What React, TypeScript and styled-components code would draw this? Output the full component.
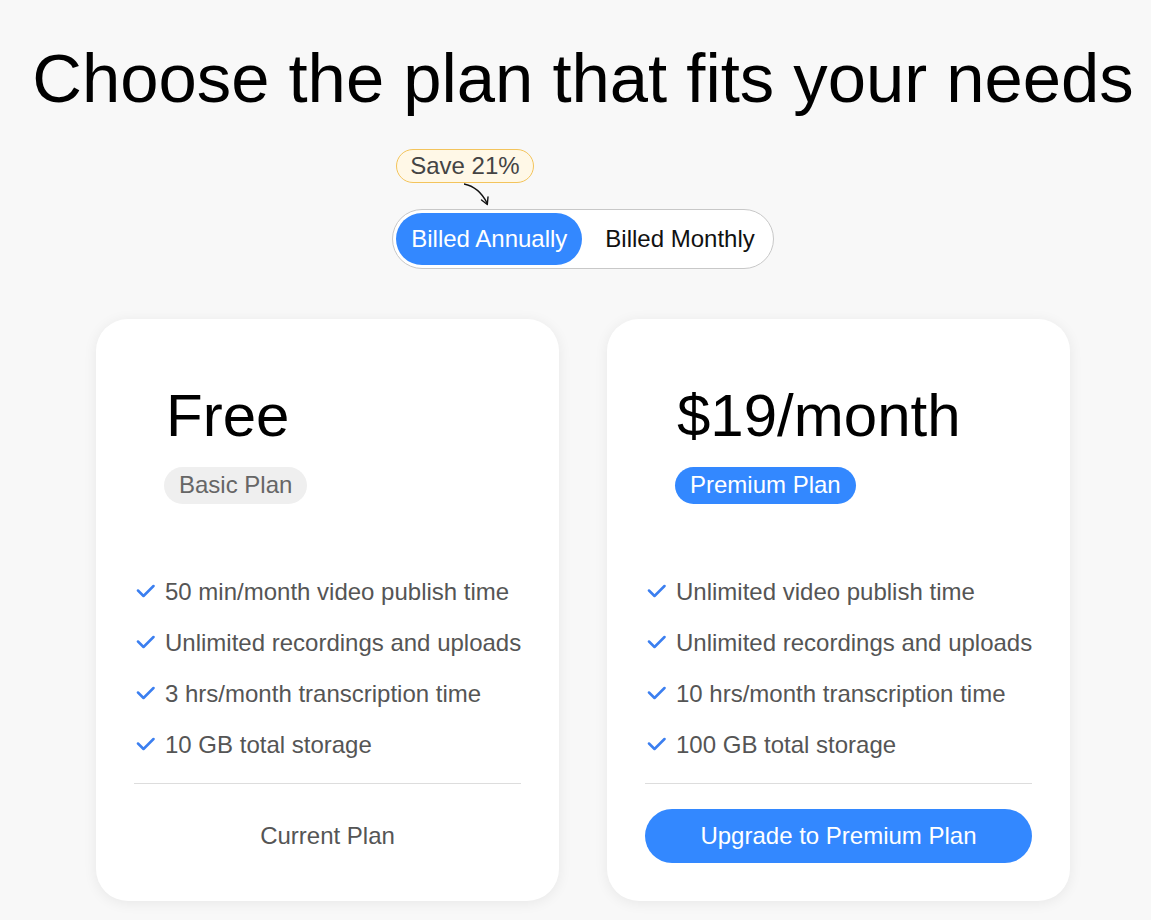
import styled, { createGlobalStyle } from "styled-components";

const GlobalStyle = createGlobalStyle`
  html, body {
    margin: 0;
    padding: 0;
    background: #f8f8f8;
  }
  body {
    font-family: "Liberation Sans", Arial, sans-serif;
  }
`;

const Page = styled.div`
  min-height: 920px;
  padding-left: 15px;
  display: flex;
  flex-direction: column;
  align-items: center;
`;

const Heading = styled.h1`
  margin: 39px 0 0;
  font-size: 68.8px;
  font-weight: 400;
  line-height: 79px;
  color: #000;
  white-space: nowrap;
`;

const Switcher = styled.div`
  margin-top: 31px;
  display: flex;
  flex-direction: column;
  align-items: flex-start;
`;

const SaveBadge = styled.span`
  margin-left: 4px;
  padding: 2px 13px;
  font-size: 24px;
  line-height: 28px;
  color: #444;
  background: #fff8e7;
  border: 1px solid #f3c45c;
  border-radius: 18px;
`;

const Arrow = styled.svg`
  display: block;
  margin-left: 72px;
  width: 30px;
  height: 26px;
`;

const Toggle = styled.div`
  display: flex;
  gap: 8px;
  padding: 3px;
  background: #fff;
  border: 1px solid #c8c8c8;
  border-radius: 40px;
`;

const ToggleOption = styled.button<{ $active?: boolean }>`
  padding: 12px 15px;
  border: none;
  border-radius: 30px;
  font-family: inherit;
  font-size: 24px;
  line-height: 27.6px;
  cursor: pointer;
  color: ${(p) => (p.$active ? "#fff" : "#111")};
  background: ${(p) => (p.$active ? "#3388ff" : "transparent")};
`;

const Cards = styled.div`
  margin-top: 50px;
  display: flex;
  gap: 48px;
`;

const Card = styled.div`
  width: 463px;
  box-sizing: border-box;
  padding: 38px;
  background: #fff;
  border-radius: 32px;
  box-shadow: 0 2px 14px rgba(0, 0, 0, 0.07);
  display: flex;
  flex-direction: column;
`;

const CardHead = styled.div`
  padding: 24px 0 0 30px;
  display: flex;
  flex-direction: column;
  align-items: flex-start;
`;

const Price = styled.div`
  font-size: 60px;
  line-height: 69px;
  color: #000;
  margin-left: 2px;
`;

const PlanTag = styled.span<{ $premium?: boolean }>`
  margin-top: 17px;
  padding: 4.5px 15px;
  font-size: 24px;
  line-height: 28px;
  border-radius: 20px;
  color: ${(p) => (p.$premium ? "#fff" : "#666")};
  background: ${(p) => (p.$premium ? "#3388ff" : "#efefef")};
`;

const Features = styled.ul`
  list-style: none;
  margin: 74px 0 0;
  padding: 0;
  display: flex;
  flex-direction: column;
  gap: 23.4px;
`;

const Feature = styled.li`
  display: flex;
  align-items: center;
  gap: 10px;
  font-size: 24px;
  line-height: 27.6px;
  color: #555;
  white-space: nowrap;
`;

const CheckIcon = styled.svg`
  flex: none;
  margin-left: 2px;
  width: 19px;
  height: 14px;
`;

const Divider = styled.hr`
  margin: 25px 0;
  border: none;
  border-top: 1px solid #ddd;
`;

const Action = styled.button<{ $primary?: boolean }>`
  height: 54px;
  border: none;
  border-radius: 27px;
  font-family: inherit;
  font-size: 24px;
  cursor: ${(p) => (p.$primary ? "pointer" : "default")};
  color: ${(p) => (p.$primary ? "#fff" : "#555")};
  background: ${(p) => (p.$primary ? "#3388ff" : "transparent")};
`;

const Check = () => (
  <CheckIcon viewBox="0 0 19 14">
    <path
      d="M2 6.5 L7.5 12 L17.5 2"
      fill="none"
      stroke="#3b7ff0"
      strokeWidth="2.5"
      strokeLinecap="round"
      strokeLinejoin="round"
    />
  </CheckIcon>
);

const plans = [
  {
    price: "Free",
    tag: "Basic Plan",
    premium: false,
    features: [
      "50 min/month video publish time",
      "Unlimited recordings and uploads",
      "3 hrs/month transcription time",
      "10 GB total storage",
    ],
    action: "Current Plan",
  },
  {
    price: "$19/month",
    tag: "Premium Plan",
    premium: true,
    features: [
      "Unlimited video publish time",
      "Unlimited recordings and uploads",
      "10 hrs/month transcription time",
      "100 GB total storage",
    ],
    action: "Upgrade to Premium Plan",
  },
];

export default function App() {
  return (
    <>
      <GlobalStyle />
      <Page>
        <Heading>Choose the plan that fits your needs</Heading>
        <Switcher>
          <SaveBadge>Save 21%</SaveBadge>
          <Arrow viewBox="0 0 30 26">
            <path
              d="M0 1 C 10 3, 17 8, 23 20"
              fill="none"
              stroke="#111"
              strokeWidth="1.4"
              strokeLinecap="round"
            />
            <path
              d="M17.5 17 L23.3 21.5 L24 14"
              fill="none"
              stroke="#111"
              strokeWidth="1.4"
              strokeLinecap="round"
              strokeLinejoin="round"
            />
          </Arrow>
          <Toggle>
            <ToggleOption $active>Billed Annually</ToggleOption>
            <ToggleOption>Billed Monthly</ToggleOption>
          </Toggle>
        </Switcher>
        <Cards>
          {plans.map((plan) => (
            <Card key={plan.tag}>
              <CardHead>
                <Price>{plan.price}</Price>
                <PlanTag $premium={plan.premium}>{plan.tag}</PlanTag>
              </CardHead>
              <Features>
                {plan.features.map((f) => (
                  <Feature key={f}>
                    <Check />
                    {f}
                  </Feature>
                ))}
              </Features>
              <Divider />
              <Action $primary={plan.premium}>{plan.action}</Action>
            </Card>
          ))}
        </Cards>
      </Page>
    </>
  );
}
